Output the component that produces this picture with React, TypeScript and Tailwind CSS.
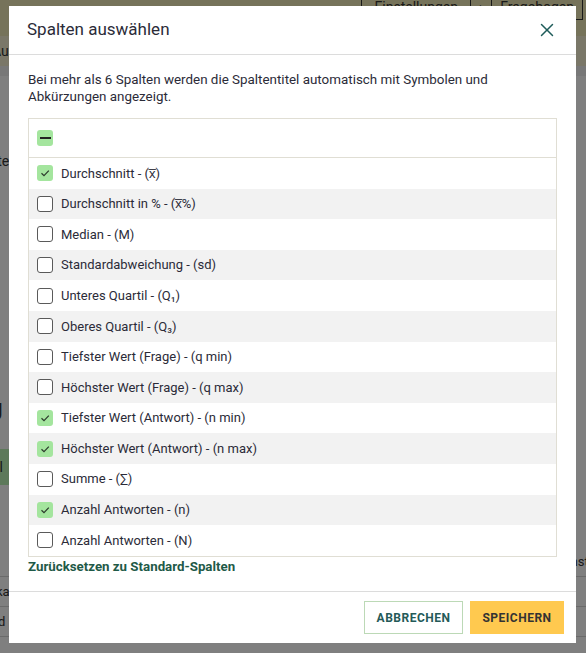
import { X } from 'lucide-react';

type Col = { label: string; checked: boolean };

const columns: Col[] = [
  { label: 'Durchschnitt - (x̅)', checked: true },
  { label: 'Durchschnitt in % - (x̅%)', checked: false },
  { label: 'Median - (M)', checked: false },
  { label: 'Standardabweichung - (sd)', checked: false },
  { label: 'Unteres Quartil - (Q₁)', checked: false },
  { label: 'Oberes Quartil - (Q₃)', checked: false },
  { label: 'Tiefster Wert (Frage) - (q min)', checked: false },
  { label: 'Höchster Wert (Frage) - (q max)', checked: false },
  { label: 'Tiefster Wert (Antwort) - (n min)', checked: true },
  { label: 'Höchster Wert (Antwort) - (n max)', checked: true },
  { label: 'Summe - (∑)', checked: false },
  { label: 'Anzahl Antworten - (n)', checked: true },
  { label: 'Anzahl Antworten - (N)', checked: false },
];

function Checkbox({ checked }: { checked: boolean }) {
  if (checked) {
    return (
      <span className="flex h-4 w-4 shrink-0 items-center justify-center rounded-[3px] bg-[#a4e59e]">
        <svg width="12" height="12" viewBox="0 0 12 12" fill="none">
          <path d="M2.5 6.2 L5 8.6 L9.8 3.6" stroke="#2c3a2c" strokeWidth="1.2" />
        </svg>
      </span>
    );
  }
  return <span className="h-4 w-4 shrink-0 rounded-[3px] border border-[#5a5a5a] bg-white" />;
}

function Background() {
  return (
    <div className="flex h-[653px] w-[586px] flex-col overflow-hidden bg-white text-[#333]">
      {/* top bar */}
      <div className="flex h-[36px] items-start justify-end bg-[#ece6b4] pr-[3px]">
        <div className="-mt-[6px] flex h-[26px] border border-[#333] text-[14px]">
          <span className="flex items-center border-r border-[#333] px-3">Einstellungen</span>
          <span className="flex items-center border-r border-[#333] px-2">›</span>
          <span className="flex items-center px-2">Fragebogen</span>
        </div>
      </div>
      <div className="flex h-[30px] items-center bg-[#f4efd0] text-[14px]">
        <span className="-ml-[8px]">Auswertung</span>
      </div>
      <div className="h-[10px] bg-[#f0f0f0]" />
      <div className="flex h-[100px] items-end pb-[4px] text-[14px]">
        <span className="-ml-[30px]">Spalten</span>
      </div>
      <div className="h-[215px]" />
      <div className="text-[22px] font-semibold">
        <span className="-ml-[10px]">g</span>
      </div>
      <div className="mt-[25px] flex h-[36px] w-[60px] items-center bg-[#bbf3b5] text-[14px]">
        <span className="-ml-[8px]">el</span>
      </div>
      <div className="mt-[62px] flex h-[30px] items-center justify-end border-b border-[#d4d4d4] text-[13px]">
        <span className="-mr-[14px]">Höchster</span>
      </div>
      <div className="flex h-[30px] items-center border-b border-[#d4d4d4] text-[13px]">
        <span className="-ml-[4px]">ka</span>
      </div>
      <div className="flex h-[30px] items-center border-b border-[#d4d4d4] text-[13px]">
        <span className="-ml-[2px]">d</span>
      </div>
    </div>
  );
}

export default function App() {
  return (
    <div className="relative h-[653px] w-[586px] overflow-hidden" style={{ fontFamily: 'Roboto, "Liberation Sans", sans-serif' }}>
      <Background />

      {/* overlay + modal */}
      <div className="absolute inset-0 bg-black/50 pl-[9px] pt-[6px]">
        <div className="flex h-[637px] w-[567px] flex-col bg-white">
          {/* header */}
          <div className="flex h-[49px] shrink-0 items-center justify-between border-b border-[#dcdcdc] pl-[18px] pr-[18px]">
            <h2 className="text-[17px] text-[#2b2b38]">Spalten auswählen</h2>
            <X className="h-[22px] w-[22px] text-[#1f5c5a]" strokeWidth={1.6} />
          </div>

          {/* body */}
          <div className="flex flex-1 flex-col px-[19px] pt-[16px]">
            <p className="max-w-[500px] text-[13.4px] leading-[17px] text-[#2b2b38]">
              Bei mehr als 6 Spalten werden die Spaltentitel automatisch mit Symbolen und Abkürzungen angezeigt.
            </p>

            <div className="mt-[13px] border border-[#e0ded4]">
              <div className="flex h-[39px] items-center border-b border-[#e0ded4] pl-[8px]">
                <span className="flex h-4 w-4 items-center justify-center rounded-[3px] bg-[#a4e59e]">
                  <span className="h-[2px] w-[11px] bg-[#222]" />
                </span>
              </div>
              {columns.map((c, i) => (
                <div
                  key={c.label}
                  className={`flex h-[30.6px] items-center gap-[8px] pl-[8px] text-[13px] text-[#2b2b38] ${
                    i % 2 === 1 ? 'bg-[#f2f2f2]' : 'bg-white'
                  }`}
                >
                  <Checkbox checked={c.checked} />
                  <span>{c.label}</span>
                </div>
              ))}
            </div>

            <button className="mt-[1px] self-start text-[13.3px] font-bold leading-[17px] text-[#1f5a48]">
              Zurücksetzen zu Standard-Spalten
            </button>
          </div>

          {/* footer */}
          <div className="flex h-[52px] shrink-0 items-center justify-end gap-[7px] border-t border-[#dcdcdc] pr-[12px]">
            <button className="h-[33px] w-[99px] border border-[#bcd9b6] text-[12px] font-bold tracking-[0.5px] text-[#245a58]">
              ABBRECHEN
            </button>
            <button className="h-[33px] w-[94px] bg-[#ffc94f] text-[12px] font-bold tracking-[0.5px] text-[#333]">
              SPEICHERN
            </button>
          </div>
        </div>
      </div>
    </div>
  );
}
